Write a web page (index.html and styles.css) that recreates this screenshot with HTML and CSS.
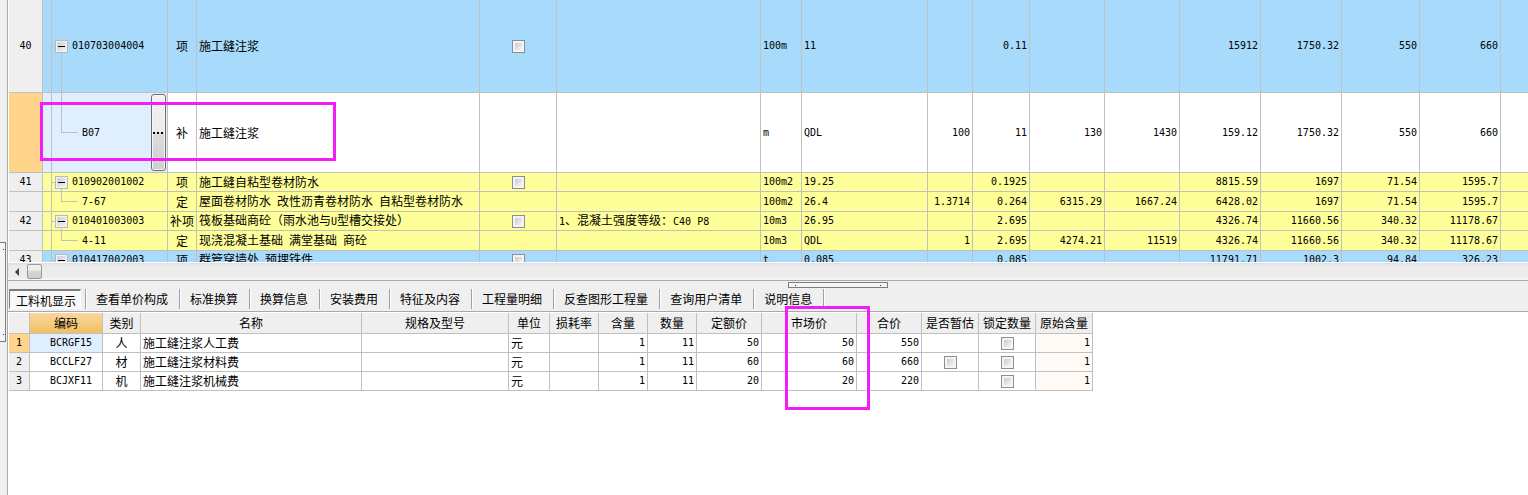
FILE: index.html
```html
<!DOCTYPE html>
<html lang="zh-CN">
<head>
<meta charset="utf-8">
<title>工料机显示</title>
<link rel="stylesheet" href="styles.css">
</head>
<body>
<div class="app">
  <aside class="gutter"><div class="side-handle"></div></aside>
  <main class="main">
    <section class="upper">
      <table class="grid bill">
        <colgroup>
          <col class="w34"><col class="w125"><col class="w29"><col class="w283"><col class="w77"><col class="w204"><col class="w41"><col class="w126"><col class="w45"><col class="w57"><col class="w75"><col class="w75"><col class="w81"><col class="w81"><col class="w78"><col class="w81"><col>
        </colgroup>
        <tbody>
          <tr class="blue h93">
            <th class="num" scope="row">40</th>
            <td class="code parent"><div class="node"><button class="toggle" aria-label="010703004004"><svg viewBox="0 0 7 7"><path d="M0 3.5H7"/></svg></button>010703004004</div></td>
            <td class="mid">项</td><td>施工缝注浆</td><td class="mid"><input type="checkbox" aria-label="施工缝注浆"></td><td></td>
            <td class="mono">100m</td><td class="mono">11</td><td class="val"></td><td class="val">0.11</td><td></td><td></td>
            <td class="val">15912</td><td class="val">1750.32</td><td class="val">550</td><td class="val">660</td><td></td>
          </tr>
          <tr class="white h80">
            <th class="num current" scope="row"></th>
            <td class="code child selected"><div class="node leaf">B07<button class="more" aria-label="B07"><svg viewBox="0 0 11 2"><path d="M0 0h2v2H0zM4 0h2v2H4zM8 0h2v2H8z"/></svg></button></div></td>
            <td class="mid">补</td><td>施工缝注浆</td><td></td><td></td>
            <td class="mono">m</td><td class="mono">QDL</td><td class="val">100</td><td class="val">11</td><td class="val">130</td><td class="val">1430</td>
            <td class="val">159.12</td><td class="val">1750.32</td><td class="val">550</td><td class="val">660</td><td></td>
          </tr>
          <tr class="yellow h19">
            <th class="num" scope="row">41</th>
            <td class="code parent"><div class="node"><button class="toggle" aria-label="010902001002"><svg viewBox="0 0 7 7"><path d="M0 3.5H7"/></svg></button>010902001002</div></td>
            <td class="mid">项</td><td>施工缝自粘型卷材防水</td><td class="mid"><input type="checkbox" aria-label="施工缝自粘型卷材防水"></td><td></td>
            <td class="mono">100m2</td><td class="mono">19.25</td><td></td><td class="val">0.1925</td><td></td><td></td>
            <td class="val">8815.59</td><td class="val">1697</td><td class="val">71.54</td><td class="val">1595.7</td><td></td>
          </tr>
          <tr class="yellow h20">
            <th class="num" scope="row"></th>
            <td class="code child"><div class="node leaf">7-67</div></td>
            <td class="mid">定</td><td>屋面卷材防水<span class="mono"> </span>改性沥青卷材防水<span class="mono"> </span>自粘型卷材防水</td><td></td><td></td>
            <td class="mono">100m2</td><td class="mono">26.4</td><td class="val">1.3714</td><td class="val">0.264</td><td class="val">6315.29</td><td class="val">1667.24</td>
            <td class="val">6428.02</td><td class="val">1697</td><td class="val">71.54</td><td class="val">1595.7</td><td></td>
          </tr>
          <tr class="yellow h19">
            <th class="num" scope="row">42</th>
            <td class="code parent"><div class="node"><button class="toggle" aria-label="010401003003"><svg viewBox="0 0 7 7"><path d="M0 3.5H7"/></svg></button>010401003003</div></td>
            <td class="mid">补项</td><td>筏板基础商砼（雨水池与<span class="mono">U</span>型槽交接处）</td><td class="mid"><input type="checkbox" aria-label="筏板基础商砼"></td><td><span class="mono">1</span>、混凝土强度等级：<span class="mono">C40 P8</span></td>
            <td class="mono">10m3</td><td class="mono">26.95</td><td></td><td class="val">2.695</td><td></td><td></td>
            <td class="val">4326.74</td><td class="val">11660.56</td><td class="val">340.32</td><td class="val">11178.67</td><td></td>
          </tr>
          <tr class="yellow h20">
            <th class="num" scope="row"></th>
            <td class="code child"><div class="node leaf">4-11</div></td>
            <td class="mid">定</td><td>现浇混凝土基础<span class="mono"> </span>满堂基础<span class="mono"> </span>商砼</td><td></td><td></td>
            <td class="mono">10m3</td><td class="mono">QDL</td><td class="val">1</td><td class="val">2.695</td><td class="val">4274.21</td><td class="val">11519</td>
            <td class="val">4326.74</td><td class="val">11660.56</td><td class="val">340.32</td><td class="val">11178.67</td><td></td>
          </tr>
          <tr class="blue h19">
            <th class="num" scope="row">43</th>
            <td class="code parent"><div class="node"><button class="toggle" aria-label="010417002003"><svg viewBox="0 0 7 7"><path d="M0 3.5H7"/></svg></button>010417002003</div></td>
            <td class="mid">项</td><td>群管穿墙处<span class="mono"> </span>预埋铁件</td><td class="mid"><input type="checkbox" aria-label="群管穿墙处 预埋铁件"></td><td></td>
            <td class="mono">t</td><td class="mono">0.085</td><td></td><td class="val">0.085</td><td></td><td></td>
            <td class="val">11791.71</td><td class="val">1002.3</td><td class="val">94.84</td><td class="val">326.23</td><td></td>
          </tr>
        </tbody>
      </table>
      <div class="callout callout-item"></div>
    </section>
    <div class="scrollbar">
      <svg class="arrow" viewBox="0 0 4 8"><path d="M4 0V8L0 4Z"/></svg>
      <div class="thumb"></div>
    </div>
    <div class="splitter"><div class="grip"></div></div>
    <nav class="tabs">
      <button class="tab active">工料机显示</button>
      <button class="tab">查看单价构成</button>
      <button class="tab">标准换算</button>
      <button class="tab">换算信息</button>
      <button class="tab">安装费用</button>
      <button class="tab">特征及内容</button>
      <button class="tab">工程量明细</button>
      <button class="tab">反查图形工程量</button>
      <button class="tab">查询用户清单</button>
      <button class="tab">说明信息</button>
    </nav>
    <section class="lower">
      <table class="grid parts">
        <colgroup>
          <col class="w21"><col class="w73"><col class="w38"><col class="w221"><col class="w147"><col class="w41"><col class="w49"><col class="w49"><col class="w49"><col class="w65"><col class="w95"><col class="w65"><col class="w57"><col class="w57"><col class="w57">
        </colgroup>
        <thead>
          <tr class="head"><th></th><th class="picked">编码</th><th>类别</th><th>名称</th><th>规格及型号</th><th>单位</th><th>损耗率</th><th>含量</th><th>数量</th><th>定额价</th><th>市场价</th><th>合价</th><th>是否暂估</th><th>锁定数量</th><th>原始含量</th></tr>
        </thead>
        <tbody>
          <tr class="white h19">
            <th class="num current" scope="row">1</th><td class="part selected">BCRGF15</td><td class="mid">人</td><td>施工缝注浆人工费</td><td></td><td>元</td><td></td>
            <td class="val">1</td><td class="val">11</td><td class="val">50</td><td class="val">50</td><td class="val">550</td>
            <td></td><td class="mid"><input type="checkbox" aria-label="锁定数量 1"></td><td class="val origin">1</td>
          </tr>
          <tr class="white h19">
            <th class="num" scope="row">2</th><td class="part">BCCLF27</td><td class="mid">材</td><td>施工缝注浆材料费</td><td></td><td>元</td><td></td>
            <td class="val">1</td><td class="val">11</td><td class="val">60</td><td class="val">60</td><td class="val">660</td>
            <td class="mid"><input type="checkbox" aria-label="是否暂估 2"></td><td class="mid"><input type="checkbox" aria-label="锁定数量 2"></td><td class="val origin">1</td>
          </tr>
          <tr class="white h19">
            <th class="num" scope="row">3</th><td class="part">BCJXF11</td><td class="mid">机</td><td>施工缝注浆机械费</td><td></td><td>元</td><td></td>
            <td class="val">1</td><td class="val">11</td><td class="val">20</td><td class="val">20</td><td class="val">220</td>
            <td></td><td class="mid"><input type="checkbox" aria-label="锁定数量 3"></td><td class="val origin">1</td>
          </tr>
        </tbody>
      </table>
      <div class="callout callout-price"></div>
    </section>
  </main>
</div>
</body>
</html>
```

FILE: styles.css
```css
* { box-sizing: border-box; }

body {
  margin: 0;
  background: #efefef;
  color: #000;
  font: 12px/16px "Noto Sans CJK SC", sans-serif;
}

button {
  margin: 0;
  padding: 0;
  border: 0;
  background: none;
  color: inherit;
  font: inherit;
}

.app { display: flex; height: 100vh; overflow: hidden; }

.gutter {
  flex: none;
  display: flex;
  flex-direction: column;
  width: 7px;
  padding-top: 242px;
}

.side-handle {
  width: 6px;
  height: 100px;
  border: 1px solid #7c7c7c;
  border-left: 0;
  background:
    linear-gradient(#202090, #202090) 3px 6px / 1px 1px no-repeat,
    linear-gradient(#202090, #202090) 3px 91px / 1px 1px no-repeat,
    #f4f4f6;
}

.main {
  flex: 1;
  display: flex;
  flex-direction: column;
  min-width: 0;
  border-left: 1px solid #a8a8b0;
}

.upper {
  position: relative;
  flex: 1;
  min-height: 0;
  overflow: hidden;
  padding-left: 1px;
  background: #fff;
}

/* grids */
.grid {
  table-layout: fixed;
  border-collapse: separate;
  border-spacing: 0;
}

.bill { width: 100%; }
.parts { width: 1084px; }

.w21 { width: 21px; }
.w29 { width: 29px; }
.w34 { width: 34px; }
.w38 { width: 38px; }
.w41 { width: 41px; }
.w45 { width: 45px; }
.w49 { width: 49px; }
.w57 { width: 57px; }
.w65 { width: 65px; }
.w73 { width: 73px; }
.w75 { width: 75px; }
.w77 { width: 77px; }
.w78 { width: 78px; }
.w81 { width: 81px; }
.w95 { width: 95px; }
.w125 { width: 125px; }
.w126 { width: 126px; }
.w147 { width: 147px; }
.w204 { width: 204px; }
.w221 { width: 221px; }
.w283 { width: 283px; }

.grid th, .grid td {
  padding: 0 2px;
  border-right: 1px solid #c0c0c0;
  border-bottom: 1px solid #c0c0c0;
  font-weight: normal;
  text-align: left;
  vertical-align: middle;
  white-space: nowrap;
}

.bill td:last-child { border-right: 0; }

.h19 { height: 19px; }
.h20 { height: 20px; }
.h80 { height: 80px; }
.h93 { height: 93px; }

.blue { background: #a8dbfb; }
.yellow { background: #ffff99; }
.white { background: #fff; }

.mono, .grid .num, .grid .val, .grid .code, .grid .part {
  font-family: "DejaVu Sans Mono", "Noto Sans CJK SC", monospace;
  font-size: 10px;
}

.grid .num { background: #efefef; text-align: center; }
.grid .current { background: #ffd48b; }
.grid .val { text-align: right; }
.grid .mid { padding: 0; text-align: center; }
.grid .selected { background-color: #e0efff; }
.grid .origin { background: #fffaf5; }
.grid .part { padding-left: 20px; }

/* tree column */
.grid .code { padding: 0; background-repeat: no-repeat; }

.grid .parent {
  background-image:
    linear-gradient(#c0c0c0, #c0c0c0),
    linear-gradient(#c0c0c0, #c0c0c0),
    linear-gradient(transparent 50%, #c0c0c0 50%);
  background-position: 8px 0, 8px 50%, 18px 0;
  background-size: 1px 100%, 5px 1px, 1px 100%;
}

.grid .child {
  background-image:
    linear-gradient(#c0c0c0, #c0c0c0),
    linear-gradient(#c0c0c0, #c0c0c0),
    linear-gradient(#c0c0c0 50%, transparent 50%);
  background-position: 8px 0, 18px 50%, 18px 0;
  background-size: 1px 100%, 17px 1px, 1px 100%;
}

.node {
  display: flex;
  align-items: center;
  gap: 4px;
  padding-left: 12px;
}

.leaf { justify-content: space-between; padding: 0 1px 0 39px; }

.toggle {
  display: flex;
  align-items: center;
  justify-content: center;
  width: 13px;
  height: 13px;
  border: 1px solid #b8b8b8;
  background: linear-gradient(135deg, #c8ccd2, #f6f6f6);
  box-shadow: inset 0 0 0 1px #f4f4f4;
}

.toggle svg { width: 7px; height: 7px; stroke: #000; }

.more {
  display: flex;
  align-items: center;
  justify-content: center;
  width: 15px;
  height: 77px;
  border: 1px solid #707070;
  border-radius: 3px;
  background: linear-gradient(#f2f2f2, #ebebeb 50%, #dcdcdc 50%, #cfcfcf);
  box-shadow: inset 0 0 0 1px #f6f6f6;
}

.more svg { width: 11px; height: 2px; }

input[type="checkbox"] {
  appearance: none;
  display: block;
  width: 13px;
  height: 13px;
  margin: 0 auto;
  border: 1px solid #8e8f8f;
  background: linear-gradient(135deg, #c6cbd2, #f6f6f6) content-box, #f4f4f4;
  padding: 2px;
}

/* scrollbar and splitter */
.scrollbar {
  flex: none;
  display: flex;
  align-items: center;
  gap: 8px;
  height: 19px;
  padding: 0 7px;
  border-top: 1px solid #fff;
  border-bottom: 1px solid #a8a8b0;
  background: linear-gradient(#dfdfdf, #ebebeb 3px, #ededed 14px, #f8f8f8);
}

.arrow { width: 4px; height: 8px; fill: #404040; }

.thumb {
  width: 15px;
  height: 15px;
  border: 1px solid #999;
  border-radius: 2px;
  background: linear-gradient(#f3f3f3, #e8e8e8 50%, #d6d6d6 50%, #cdcdcd);
}

.splitter { flex: none; height: 8px; padding: 1px 0 0 780px; }

.grip {
  width: 100px;
  height: 6px;
  border: 1px solid #7c7c7c;
  background:
    linear-gradient(#202090, #202090) 6px 2px / 1px 1px no-repeat,
    linear-gradient(#202090, #202090) 91px 2px / 1px 1px no-repeat,
    #f4f4f6;
}

/* tabs */
.tabs {
  flex: none;
  display: flex;
  height: 23px;
  padding: 0 0 2px 1px;
  border-bottom: 1px solid #a8a8b0;
}

.tab {
  height: 20px;
  padding: 0 11px 0 10px;
  border-right: 1px solid #a0a0a0;
  box-shadow: 1px 0 0 #fff;
  line-height: 18px;
  white-space: nowrap;
}

.tab.active {
  margin-right: 5px;
  padding: 2px 4px 0 6px;
  border: 1px solid #fff;
  border-top: 2px solid #7c7c7c;
  border-left: 1px solid #7c7c7c;
  background: #f8f8f8;
  box-shadow: 4px 0 0 #efefef, 5px 0 0 #a0a0a0, 6px 0 0 #fff;
  line-height: 16px;
}

/* lower pane */
.lower {
  position: relative;
  flex: 0 0 183px;
  padding: 1px 0 0 1px;
  background: #fff;
}

.head { height: 21px; }
.grid .head th { padding: 0; background: #efefef; text-align: center; }
.grid .head .picked { background: linear-gradient(#f9d79f, #f2bf60); }

/* highlight frames laid over the grids */
.callout { position: absolute; border: 3px solid #f41cf4; pointer-events: none; }
.callout-item { left: 32px; top: 102px; width: 296px; height: 59px; }
.callout-price { left: 777px; top: -6px; width: 85px; height: 104px; }
```
